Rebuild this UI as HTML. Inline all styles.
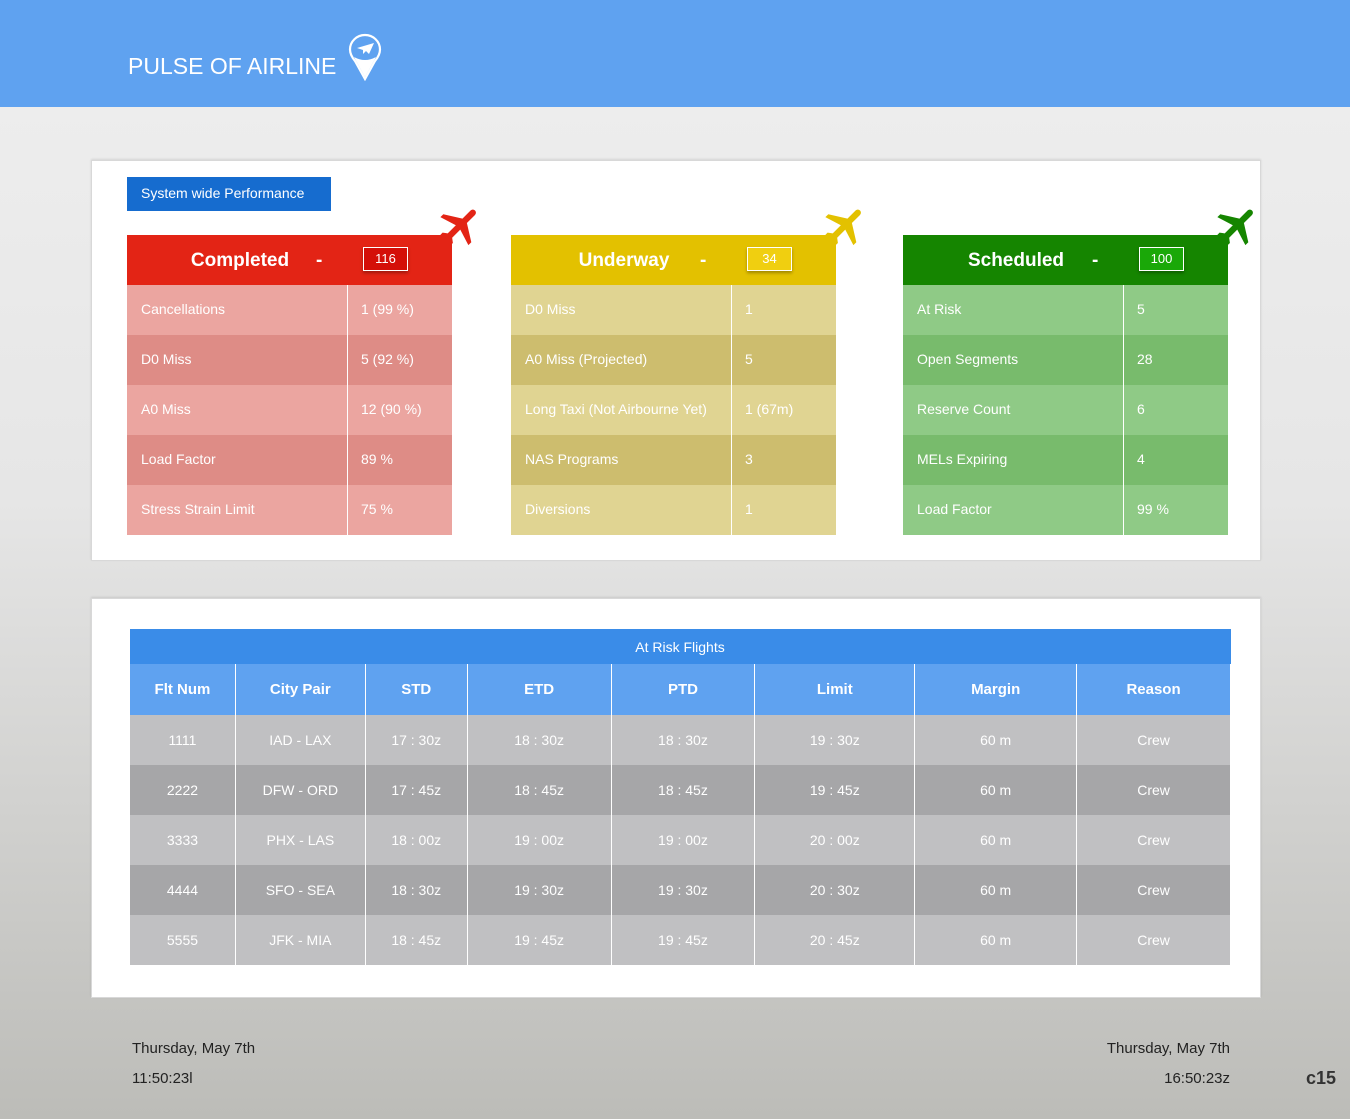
<!DOCTYPE html>
<html><head><meta charset="utf-8"><style>
*{margin:0;padding:0;box-sizing:border-box}
body{width:1350px;height:1119px;font-family:"Liberation Sans",sans-serif;background:linear-gradient(#ededed 107px,#e6e6e6 500px,#bcbcb8 1119px);position:relative;overflow:hidden}
.hdr{position:absolute;left:0;top:0;width:1350px;height:107px;background:#5fa2f0}
.title{position:absolute;left:128px;top:53px;color:#fff;font-size:23px;letter-spacing:0}
.panel{position:absolute;left:91px;width:1170px;background:#fff;border:1px solid #d8d8d8;box-shadow:0 -1px 2px rgba(0,0,0,.1)}
.swp{position:absolute;left:127px;top:177px;width:204px;height:34px;background:#166ccf;color:#fff;font-size:14px;line-height:33px;padding-left:14px}
.card{position:absolute;top:235px;width:325px}
.card .h{height:50px;color:#fff;font-size:19px;position:relative;font-weight:bold}
.card .h .n{position:absolute;left:40px;top:15px;width:120px;text-align:center}
.card .h .d{position:absolute;left:189px;top:15px}
.card .h .b{position:absolute;left:236px;top:12px;width:45px;height:24px;border:1px solid #fff;font-size:13px;font-weight:normal;text-align:center;line-height:22px;box-shadow:0 2px 3px rgba(0,0,0,.3)}
.row{height:50px;color:#fff;font-size:14px;position:relative;line-height:48px}
.row .l{position:absolute;left:14px}
.row .v{position:absolute;left:234px}
.row:before{content:"";position:absolute;left:220px;top:0;width:1px;height:50px;background:#fff}
.plane{position:absolute;top:201px;width:50px;height:50px}
table{position:absolute;left:129px;top:629px;width:1102px;border-collapse:collapse;color:#fff;font-size:14px;text-align:center}
td,th{border-left:1px solid #fff;border-right:1px solid #fff;padding:0}
.tt td{height:35px;background:#3a8ce8;border:none}
th{height:51px;background:#5fa2f0;font-size:15px}
tbody tr td{height:50px}
.a td{background:#c0c0c2}.b2 td{background:#a6a6a8}
.ft{position:absolute;font-size:15px;color:#222}
</style></head><body>
<div class="hdr"></div>
<div class="title">PULSE OF AIRLINE</div>
<svg style="position:absolute;left:348px;top:33px" width="34" height="48" viewBox="0 0 34 48"><path d="M17 2C8.7 2 2 8.5 2 16.5c0 5 2.5 8.5 5 11.5L17 46l10-18c2.5-3 5-6.5 5-11.5C32 8.5 25.3 2 17 2z" fill="none" stroke="#fff" stroke-width="2.2"/><path d="M9 15l17-5-5 11-3-3-3 3v-4z" fill="#fff"/><path d="M6 24 Q17 30 28 24 L17 44z" fill="#fff"/></svg>
<div class="panel" style="top:160px;height:401px"></div>
<div class="panel" style="top:598px;height:400px"></div>
<div class="swp">System wide Performance</div>

<div class="card" style="left:127px"><div class="h" style="background:#e32415"><span class="n" style="left:53px">Completed</span><span class="d">-</span><span class="b" style="background:#d40f08">116</span></div>
<div class="row" style="background:#eba5a0"><span class="l">Cancellations</span><span class="v">1 (99 %)</span></div>
<div class="row" style="background:#de8c86"><span class="l">D0 Miss</span><span class="v">5 (92 %)</span></div>
<div class="row" style="background:#eba5a0"><span class="l">A0 Miss</span><span class="v">12 (90 %)</span></div>
<div class="row" style="background:#de8c86"><span class="l">Load Factor</span><span class="v">89 %</span></div>
<div class="row" style="background:#eba5a0"><span class="l">Stress Strain Limit</span><span class="v">75 %</span></div></div>

<div class="card" style="left:511px"><div class="h" style="background:#e3c100"><span class="n" style="left:53px">Underway</span><span class="d">-</span><span class="b" style="background:#f0cf10">34</span></div>
<div class="row" style="background:#e0d492"><span class="l">D0 Miss</span><span class="v">1</span></div>
<div class="row" style="background:#cdbd6e"><span class="l">A0 Miss (Projected)</span><span class="v">5</span></div>
<div class="row" style="background:#e0d492"><span class="l">Long Taxi (Not Airbourne Yet)</span><span class="v">1 (67m)</span></div>
<div class="row" style="background:#cdbd6e"><span class="l">NAS Programs</span><span class="v">3</span></div>
<div class="row" style="background:#e0d492"><span class="l">Diversions</span><span class="v">1</span></div></div>

<div class="card" style="left:903px"><div class="h" style="background:#158500"><span class="n" style="left:53px">Scheduled</span><span class="d">-</span><span class="b" style="background:#1aa808">100</span></div>
<div class="row" style="background:#8fca86"><span class="l">At Risk</span><span class="v">5</span></div>
<div class="row" style="background:#78bb6c"><span class="l">Open Segments</span><span class="v">28</span></div>
<div class="row" style="background:#8fca86"><span class="l">Reserve Count</span><span class="v">6</span></div>
<div class="row" style="background:#78bb6c"><span class="l">MELs Expiring</span><span class="v">4</span></div>
<div class="row" style="background:#8fca86"><span class="l">Load Factor</span><span class="v">99 %</span></div></div>

<svg class="plane" style="left:436px" viewBox="0 0 24 24"><path transform="rotate(45 12 12)" fill="#e32415" d="M21 16v-2l-8-5V3.5c0-.83-.67-1.5-1.5-1.5S10 2.67 10 3.5V9l-8 5v2l8-2.5V19l-2 1.5V22l3.5-1 3.5 1v-1.5L13 19v-5.5l8 2.5z"/></svg>
<svg class="plane" style="left:821px" viewBox="0 0 24 24"><path transform="rotate(45 12 12)" fill="#e3c100" d="M21 16v-2l-8-5V3.5c0-.83-.67-1.5-1.5-1.5S10 2.67 10 3.5V9l-8 5v2l8-2.5V19l-2 1.5V22l3.5-1 3.5 1v-1.5L13 19v-5.5l8 2.5z"/></svg>
<svg class="plane" style="left:1213px" viewBox="0 0 24 24"><path transform="rotate(45 12 12)" fill="#158500" d="M21 16v-2l-8-5V3.5c0-.83-.67-1.5-1.5-1.5S10 2.67 10 3.5V9l-8 5v2l8-2.5V19l-2 1.5V22l3.5-1 3.5 1v-1.5L13 19v-5.5l8 2.5z"/></svg>

<table>
<colgroup><col style="width:106px"><col style="width:130px"><col style="width:102px"><col style="width:144px"><col style="width:144px"><col style="width:160px"><col style="width:162px"><col style="width:154px"></colgroup>
<tr class="tt"><td colspan="8">At Risk Flights</td></tr>
<tr><th>Flt Num</th><th>City Pair</th><th>STD</th><th>ETD</th><th>PTD</th><th>Limit</th><th>Margin</th><th>Reason</th></tr>
<tr class="a"><td>1111</td><td>IAD - LAX</td><td>17 : 30z</td><td>18 : 30z</td><td>18 : 30z</td><td>19 : 30z</td><td>60 m</td><td>Crew</td></tr>
<tr class="b2"><td>2222</td><td>DFW - ORD</td><td>17 : 45z</td><td>18 : 45z</td><td>18 : 45z</td><td>19 : 45z</td><td>60 m</td><td>Crew</td></tr>
<tr class="a"><td>3333</td><td>PHX - LAS</td><td>18 : 00z</td><td>19 : 00z</td><td>19 : 00z</td><td>20 : 00z</td><td>60 m</td><td>Crew</td></tr>
<tr class="b2"><td>4444</td><td>SFO - SEA</td><td>18 : 30z</td><td>19 : 30z</td><td>19 : 30z</td><td>20 : 30z</td><td>60 m</td><td>Crew</td></tr>
<tr class="a"><td>5555</td><td>JFK - MIA</td><td>18 : 45z</td><td>19 : 45z</td><td>19 : 45z</td><td>20 : 45z</td><td>60 m</td><td>Crew</td></tr>
</table>

<div class="ft" style="left:132px;top:1040px">Thursday, May 7th</div>
<div class="ft" style="left:132px;top:1070px">11:50:23l</div>
<div class="ft" style="right:120px;top:1040px">Thursday, May 7th</div>
<div class="ft" style="right:120px;top:1070px">16:50:23z</div>
<div class="ft" style="right:14px;top:1068px;font-size:18px;color:#333;font-weight:bold">c15</div>
</body></html>
